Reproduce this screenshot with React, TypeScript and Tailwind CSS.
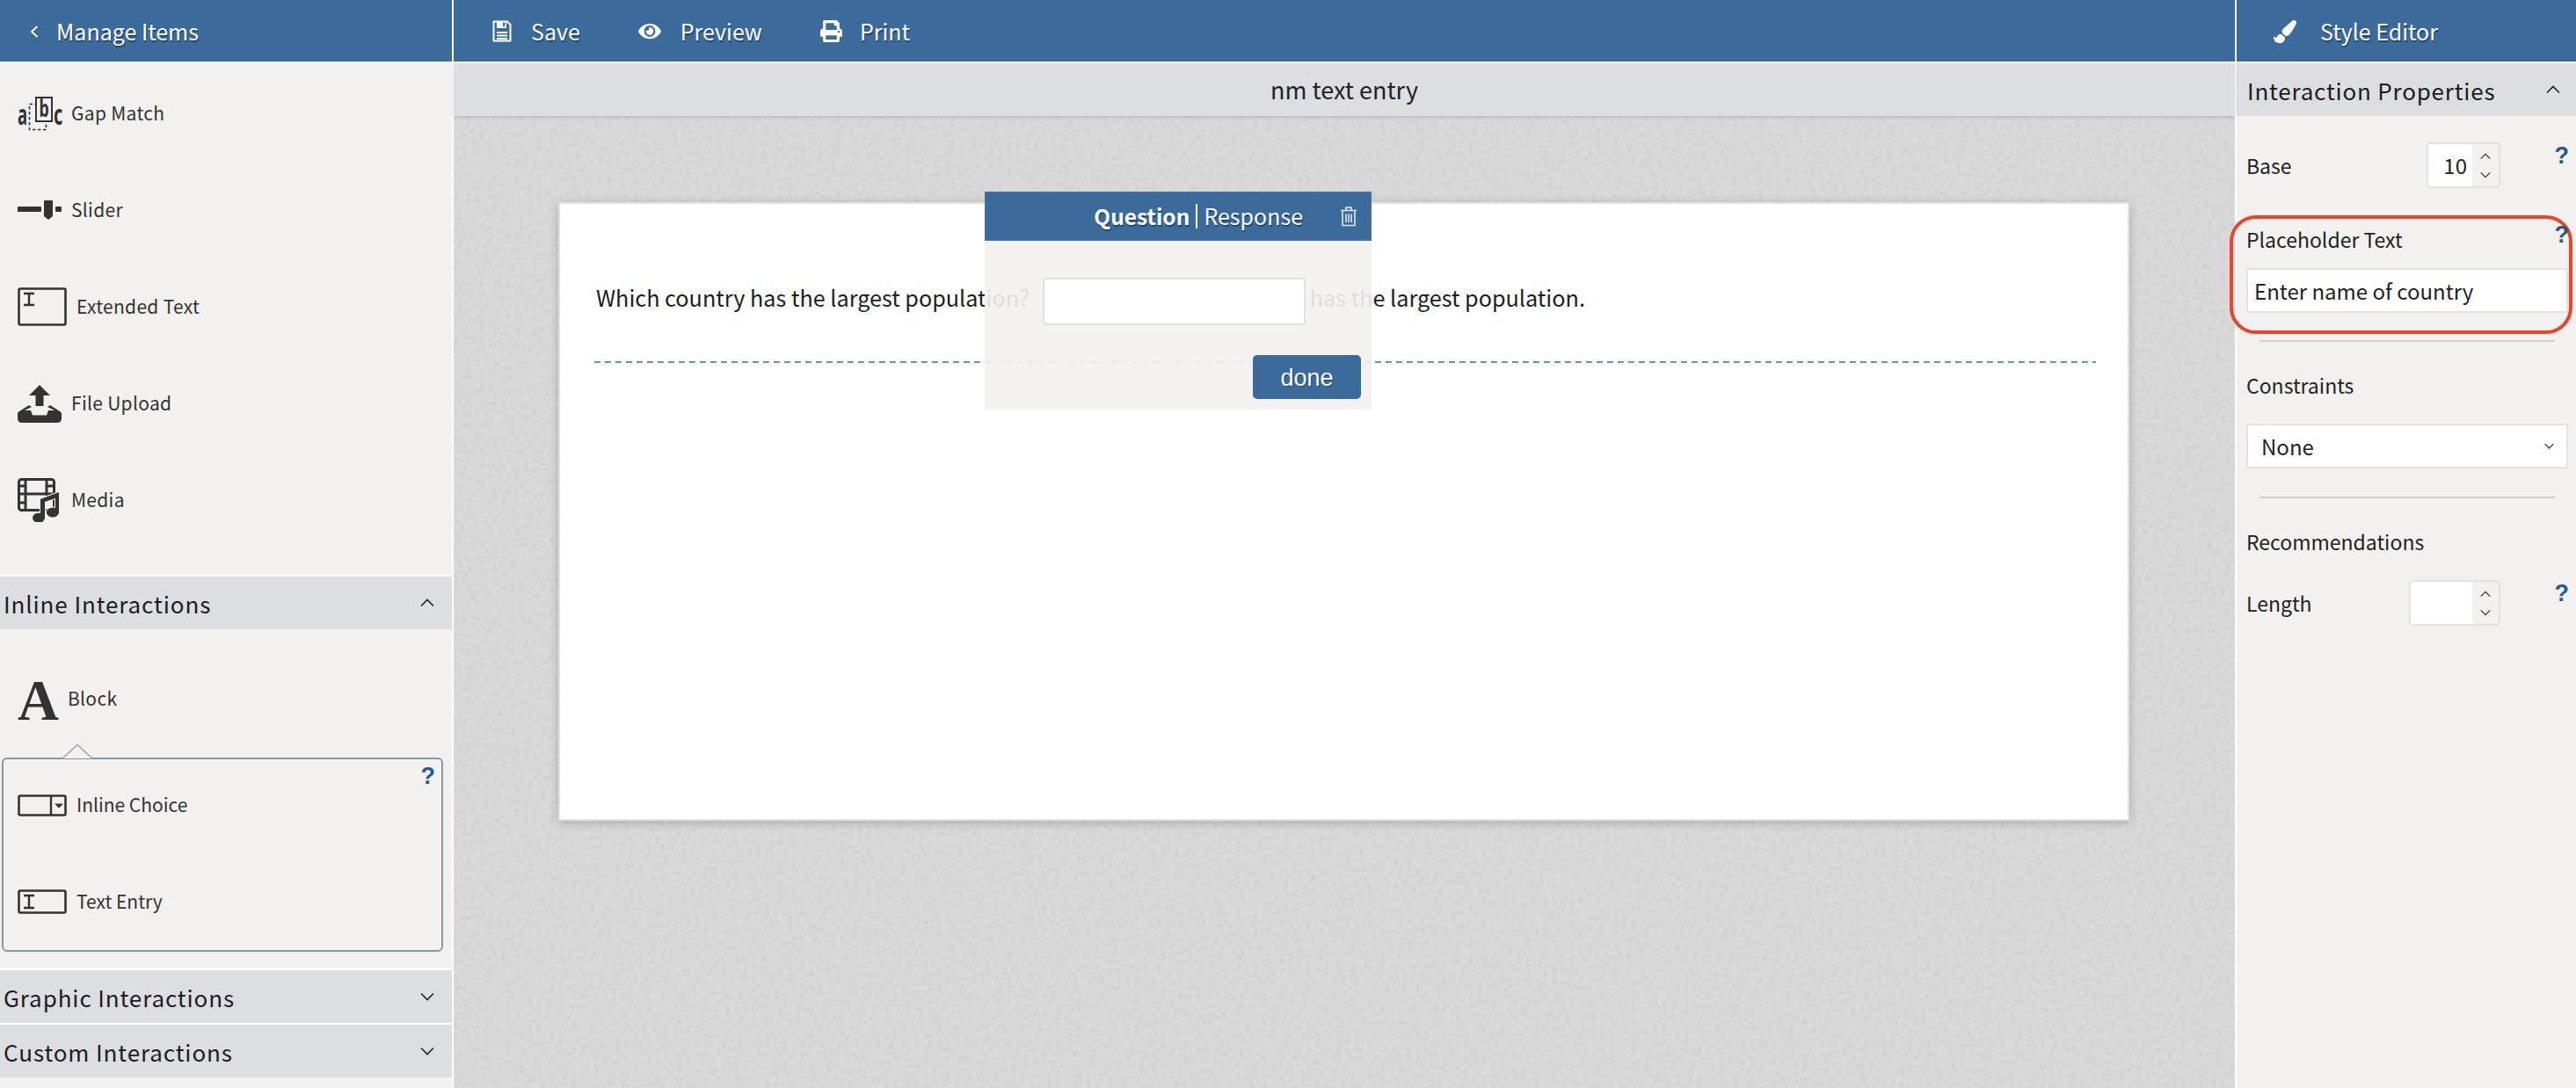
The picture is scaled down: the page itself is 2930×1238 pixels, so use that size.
import React from "react";
import { FaEye, FaPrint, FaPaintBrush } from "react-icons/fa";

const font = { fontFamily: '"Noto Sans CJK JP", "Noto Sans", sans-serif' };

function Chevron({ up, className }: { up?: boolean; className?: string }) {
  return (
    <svg viewBox="0 0 16 10" className={className} fill="none" stroke="currentColor" strokeWidth="1.6">
      <path d={up ? "M1 8.5 L8 1.5 L15 8.5" : "M1 1.5 L8 8.5 L15 1.5"} />
    </svg>
  );
}

function Help({ className }: { className?: string }) {
  return (
    <span
      className={`text-[27px] leading-none font-bold text-[#25588f] ${className ?? ""}`}
      style={{ fontFamily: '"Liberation Sans", sans-serif' }}
    >
      ?
    </span>
  );
}

function SaveIcon() {
  return (
    <svg viewBox="0 0 22 25" className="w-[22px] h-[25px]" fill="none" stroke="#fff" strokeWidth="2">
      <path d="M1.5 1.5 H17 L20.5 5 V23.5 H1.5 Z" strokeLinejoin="round" />
      <rect x="5" y="1" width="11" height="8" fill="#fff" stroke="none" />
      <rect x="12" y="2.5" width="2.5" height="4.5" fill="#3b6b9b" stroke="none" />
      <path d="M5 14 H17 M5 17.5 H17 M5 21 H17" strokeWidth="1.8" />
    </svg>
  );
}

function TrashIcon() {
  return (
    <svg viewBox="0 0 20 24" className="w-[20px] h-[24px]" fill="none" stroke="#dfe7ef" strokeWidth="1.6">
      <path d="M1 5.5 H19 M7 5 V2 H13 V5" />
      <path d="M3 6 V22.5 H17 V6" strokeLinejoin="round" />
      <path d="M7 9.5 V19 M10 9.5 V19 M13 9.5 V19" />
    </svg>
  );
}

function GapIcon() {
  const f = { fontFamily: '"Noto Sans", sans-serif' };
  return (
    <svg viewBox="0 0 50 38" className="w-[50px] h-[38px] overflow-visible" fill="#333">
      <rect x="13.5" y="8.5" width="19" height="29" fill="none" stroke="#333" strokeWidth="1.6" strokeDasharray="3.5 2.5" />
      <text transform="translate(0 32) scale(0.58 1)" fontSize="32" fontWeight="700" style={f}>a</text>
      <rect x="21" y="1" width="18" height="27" fill="#f2f1ef" stroke="#333" strokeWidth="2" />
      <text transform="translate(24.5 23) scale(0.66 1)" fontSize="27" fontWeight="700" style={f}>b</text>
      <text transform="translate(41 32) scale(0.62 1)" fontSize="32" fontWeight="700" style={f}>c</text>
    </svg>
  );
}

function SliderIcon() {
  return (
    <svg viewBox="0 0 50 24" className="w-[50px] h-[24px]" fill="#333">
      <rect x="0" y="8" width="27" height="6" rx="1" />
      <rect x="43" y="8" width="7" height="6" rx="1" />
      <path d="M30 2 Q30 1 31 1 H39 Q40 1 40 2 V19 L35 23 L30 19 Z" />
    </svg>
  );
}

function TextBoxIcon({ tall }: { tall?: boolean }) {
  return (
    <svg viewBox={tall ? "0 0 56 44" : "0 0 56 28"} className={tall ? "w-[56px] h-[44px]" : "w-[56px] h-[28px]"} fill="none" stroke="#333">
      <rect x="1.5" y="1.5" width="53" height={tall ? 41 : 25} rx="1.5" strokeWidth="2.6" />
      <path d={tall ? "M7 7 H19 M13 7 V20 M7 20 H19" : "M7 7 H19 M13 7 V21 M7 21 H19"} strokeWidth="2.4" />
    </svg>
  );
}

function ChoiceIcon() {
  return (
    <svg viewBox="0 0 56 25" className="w-[56px] h-[25px]" fill="none" stroke="#333">
      <rect x="1.5" y="1.5" width="53" height="22" rx="1.5" strokeWidth="2.6" />
      <path d="M38 2 V23" strokeWidth="2.4" />
      <path d="M42 10.5 H52 L47 15.5 Z" fill="#333" stroke="none" />
    </svg>
  );
}

function UploadIcon() {
  return (
    <svg viewBox="0 0 50 43" className="w-[50px] h-[43px]" fill="#333">
      <path d="M25 0 L37 12 H29.5 V24 H20.5 V12 H13 Z" />
      <path d="M0 33 Q0 31 2 30 L13 23 L16 25 L8 29 H15 L17 34.5 H33 L35 29 H42 L34 25 L37 23 L48 30 Q50 31 50 33 V38 Q50 43 45 43 H5 Q0 43 0 38 Z" />
    </svg>
  );
}

function MediaIcon() {
  return (
    <svg viewBox="0 0 50 50" className="w-[50px] h-[50px]">
      <rect x="1.5" y="1.5" width="40" height="35" rx="3" fill="none" stroke="#333" strokeWidth="3" />
      <path d="M9 2 V36 M33 2 V20 M9 18 H33 M1 9 H9 M1 18 H9 M1 28 H9 M33 9 H42 M33 18 H42" stroke="#333" strokeWidth="3" fill="none" />
      <path
        d="M26 24 L47 16 V39 A7 5.5 0 1 1 43 34 V23 L31 27 V45 A7 5.5 0 1 1 26 40 Z"
        fill="#333"
        stroke="#f2f1ef"
        strokeWidth="2"
        paintOrder="stroke"
      />
    </svg>
  );
}

function Item({ icon, label, className }: { icon: React.ReactNode; label: string; className: string }) {
  return (
    <div className={`flex items-center text-[#333] text-[21px] gap-[11px] ${className}`}>
      {icon}
      <span>{label}</span>
    </div>
  );
}

function SectionHead({ label, open }: { label: string; open?: boolean }) {
  return (
    <div className="h-[60px] bg-[#dddee1] flex items-center justify-between pl-[4px] pr-[20px] text-[#1c1c1c] text-[26px] tracking-[0.9px]">
      <span>{label}</span>
      <Chevron up={open} className="w-[16px] h-[10px] text-[#222]" />
    </div>
  );
}

function Spinner({ value, w }: { value?: string; w: string }) {
  return (
    <div className={`h-[52px] border-2 border-[#e2e2e2] rounded-[4px] flex ${w}`}>
      <div className="flex-1 bg-white flex items-center justify-end pr-[6px] text-[24px] text-[#222]">{value}</div>
      <div className="w-[30px] flex flex-col items-center justify-center gap-[13px] text-[#333]">
        <Chevron up className="w-[12px] h-[8px]" />
        <Chevron className="w-[12px] h-[8px]" />
      </div>
    </div>
  );
}

export default function App() {
  const shadow = "[text-shadow:1px_2px_0_#21456e]";
  return (
    <div className="w-[2930px] h-[1238px] flex bg-white overflow-hidden" style={font}>
      {/* left */}
      <aside className="w-[514px] h-full bg-[#f2f1ef] flex flex-col shrink-0">
        <div className={`h-[70px] bg-[#3b6b9b] flex items-center pl-[34px] pt-[1px] text-white text-[25px] ${shadow}`}>
          <svg viewBox="0 0 10 14" className="w-[10px] h-[14px] mr-[20px]" fill="none" stroke="#fff" strokeWidth="1.8">
            <path d="M8.5 1 L2 7 L8.5 13" />
          </svg>
          <span>Manage Items</span>
        </div>
        <div className="pt-[4px]">
          <Item className="h-[110px] pl-[20px] tracking-[0.3px]" icon={<GapIcon />} label="Gap Match" />
          <Item className="h-[110px] pl-[20px] tracking-[0.3px]" icon={<SliderIcon />} label="Slider" />
          <Item className="h-[110px] pl-[20px] tracking-[0.3px]" icon={<TextBoxIcon tall />} label="Extended Text" />
          <Item className="h-[110px] pl-[20px] tracking-[0.3px]" icon={<UploadIcon />} label="File Upload" />
          <Item className="h-[110px] pl-[20px] tracking-[0.3px]" icon={<MediaIcon />} label="Media" />
        </div>
        <div className="mt-[30px] border-t-2 border-white">
          <SectionHead label="Inline Interactions" open />
        </div>
        <div className="h-[146px] pt-[50px]">
          <div className="flex items-center pl-[20px] gap-[10px] text-[#333] text-[21px] h-[58px] tracking-[0.3px]">
            <span className="text-[65px] leading-[58px] font-bold text-[#333] w-[47px] mt-[4px]" style={{ fontFamily: '"Liberation Serif", serif' }}>
              A
            </span>
            <span>Block</span>
          </div>
        </div>
        <div className="relative mx-[2px] w-[502px] h-[221px] border-2 border-[#8b95a1] rounded-[6px] flex flex-col">
          <svg viewBox="0 0 36 18" className="absolute left-[66px] top-[-18px] w-[36px] h-[18px]">
            <path d="M1 17 L18 1.5 L35 17" fill="#f2f1ef" stroke="#9aa3ad" strokeWidth="1.6" />
          </svg>
          <Help className="absolute right-[7px] top-[6px]" />
          <div className="pt-[23px]">
            <Item className="h-[58px] pl-[16px]" icon={<ChoiceIcon />} label="Inline Choice" />
            <div className="h-[52px]" />
            <Item className="h-[58px] pl-[16px]" icon={<TextBoxIcon />} label="Text Entry" />
          </div>
        </div>
        <div className="mt-[19px] border-t-2 border-white">
          <SectionHead label="Graphic Interactions" />
        </div>
        <div className="border-t-2 border-white">
          <SectionHead label="Custom Interactions" />
        </div>
      </aside>
      <div className="w-[2px] bg-white shrink-0" />

      {/* center */}
      <main className="flex-1 h-full flex flex-col relative">
        <div className={`h-[70px] bg-[#3b6b9b] flex items-center pl-[44px] pt-[1px] text-white text-[25px] ${shadow}`}>
          <div className="flex items-center gap-[22px]">
            <SaveIcon />
            <span>Save</span>
          </div>
          <div className="flex items-center gap-[22px] ml-[66px]">
            <FaEye className="w-[26px] h-[23px]" />
            <span>Preview</span>
          </div>
          <div className="flex items-center gap-[20px] ml-[66px]">
            <FaPrint className="w-[25px] h-[25px]" />
            <span>Print</span>
          </div>
        </div>
        <div className="h-[2px] bg-white" />
        <div className="h-[60px] bg-[#dddee1] flex items-center justify-center text-[27px] text-[#222] relative z-10 shadow-[0_1px_4px_rgba(0,0,0,0.18)]">
          nm text entry
        </div>
        <div className="flex-1 relative overflow-hidden bg-[#dadada]">
          <svg className="absolute inset-0 w-full h-full">
            <filter id="paper">
              <feTurbulence type="fractalNoise" baseFrequency="0.2" numOctaves="3" seed="4" />
              <feColorMatrix values="0 0 0 0 0.6  0 0 0 0 0.6  0 0 0 0 0.6  1.6 0 0 0 -0.62" />
              <feGaussianBlur stdDeviation="0.7" />
            </filter>
            <rect width="100%" height="100%" filter="url(#paper)" />
          </svg>
          <div className="relative mt-[98px] ml-[119px] w-[1787px] h-[704px] bg-white border-2 border-[#e2e2e2] shadow-[0_2px_10px_rgba(0,0,0,0.22)]">
            <div className="pl-[41px] h-[179px] pt-[87px]">
              <div className="text-[25.2px] leading-[38px] text-[#1e1e1e] whitespace-nowrap flex">
                <span>Which country has the largest population?</span>
                <span className="ml-[319px]">has the largest population.</span>
              </div>
            </div>
            <div className="ml-[39px] w-[1708px] h-[2px] bg-[repeating-linear-gradient(90deg,#6c93b6_0_7px,transparent_7px_12px)]" />
            <div className="absolute left-[893px] top-[163px] w-[30px] h-[30px] rounded-full border-2 border-[#dbe4ec]" />
            <div className="absolute left-[483px] top-[-14px] w-[440px] h-[248px] bg-[#f2f1efe8]">
              <div className="h-[56px] bg-[#3b6b9b] border-2 border-[#44719f] flex items-center justify-end pr-[14px] text-white text-[25px]">
                <span className={`font-bold text-[24.5px] ${shadow}`}>Question</span>
                <span className="w-[2px] h-[28px] bg-white mx-[7px]" />
                <span className={`mr-[42px] ${shadow}`}>Response</span>
                <TrashIcon />
              </div>
              <div className="mt-[42px] ml-[66px] w-[299px] h-[54px] bg-white border-2 border-[#e0e0e0] rounded-[3px]" />
              <div className="mt-[34px] ml-[305px] w-[123px] h-[50px] rounded-[5px] bg-[#3b6b9b] flex items-center justify-center text-white text-[27px] [text-shadow:1px_1px_0_#21456e] pt-[2px]" style={{ fontFamily: '"Liberation Sans", sans-serif' }}>
                done
              </div>
            </div>
          </div>
        </div>
      </main>
      <div className="w-[2px] bg-white shrink-0" />

      {/* right */}
      <aside className="w-[386px] h-full bg-[#f2f1ef] flex flex-col shrink-0 text-[#222]">
        <div className={`h-[70px] bg-[#3b6b9b] flex items-center pl-[42px] pt-[1px] gap-[27px] text-white text-[25px] ${shadow}`}>
          <FaPaintBrush className="w-[26px] h-[26px]" />
          <span>Style Editor</span>
        </div>
        <div className="h-[2px] bg-white" />
        <div className="h-[60px] bg-[#dddee1] flex items-center justify-between pl-[12px] pr-[18px] text-[#1c1c1c] text-[26px] tracking-[0.8px]">
          <span>Interaction Properties</span>
          <Chevron up className="w-[16px] h-[10px] text-[#222]" />
        </div>
        <div className="pl-[11px] pr-[9px] text-[23px]">
          <div className="mt-[30px] flex items-center relative">
            <span>Base</span>
            <Spinner value="10" w="w-[84px] ml-auto mr-[77px]" />
            <Help className="absolute right-[-1px] top-[2px]" />
          </div>
          <div className="relative mt-[31px] h-[142px]">
            <div className="absolute left-[-19px] right-[-5px] top-0 h-[135px] border-[4px] border-[#e8452a] rounded-[30px]" />
            <div className="pt-[9px] leading-[36px] relative">Placeholder Text</div>
            <Help className="absolute right-[-1px] top-[9px]" />
            <div className="relative mt-[15px] h-[51px] bg-white border-2 border-[#e2e2e2] rounded-[2px] flex items-center pl-[7px] text-[24px]">Enter name of country</div>
          </div>
          <div className="mx-[15px] h-[2px] bg-[#cfcfcf]" />
          <div className="mt-[31px] leading-[36px]">Constraints</div>
          <div className="mt-[26px] h-[51px] bg-white border-2 border-[#e2e2e2] flex items-center justify-between pl-[15px] pr-[14px] text-[24px]">
            <span>None</span>
            <Chevron className="w-[11px] h-[7px]" />
          </div>
          <div className="mt-[32px] mx-[15px] h-[2px] bg-[#cfcfcf]" />
          <div className="mt-[31px] leading-[36px]">Recommendations</div>
          <div className="mt-[26px] flex items-center relative">
            <span>Length</span>
            <Spinner w="w-[104px] ml-auto mr-[77px]" />
            <Help className="absolute right-[-1px] top-[2px]" />
          </div>
        </div>
      </aside>
    </div>
  );
}
